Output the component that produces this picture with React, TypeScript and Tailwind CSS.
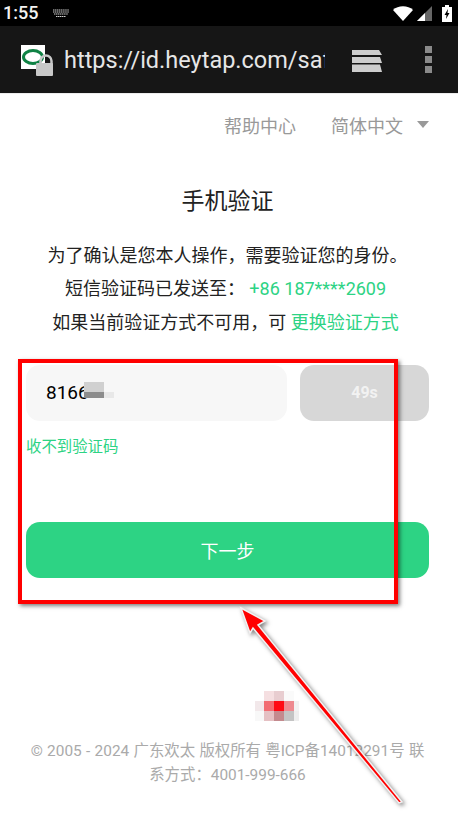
const FONT = "font-['Roboto','Noto_Sans_CJK_SC',sans-serif]"

function StatusBar() {
  return (
    <div className="flex h-[26px] items-center justify-between bg-black pl-[3px] pr-[6px]">
      <div className="flex items-center gap-[15px]">
        <span className="text-[18px] leading-none font-medium text-[#f2f2f2]">1:55</span>
        <svg width="16" height="9" viewBox="0 0 16 9" fill="none" stroke="#cfcfcf" strokeWidth="1.200">
          <path d="M0 1h16M0 3h16M1 5h14M3 7.500h10" strokeDasharray="1.400 .5" />
        </svg>
      </div>
      <div className="flex items-center">
        <svg width="20" height="15" viewBox="0 0 20 15" className="mr-[4px]">
          <path d="M0 4 C5 -1 15 -1 20 4 L10 15 Z" fill="#fff" />
        </svg>
        <svg width="15" height="15" viewBox="0 0 15 15" className="mr-[10px]">
          <path d="M0 15 L15 0 V15 Z" fill="#666" />
          <path d="M0 15 L8 7 V15 Z" fill="#fff" />
        </svg>
        <svg width="10" height="17" viewBox="0 0 10 17">
          <path d="M3 0h4v2h3v15H0V2h3z" fill="#fff" />
          <path d="M6 4 L2.500 10 H4.500 L4 14 L7.500 8 H5.500 Z" fill="#000" />
        </svg>
      </div>
    </div>
  )
}

function SiteIcon() {
  return (
    <svg width="34" height="32" viewBox="0 0 34 32" className="shrink-0">
      <rect x="0" y="0" width="24" height="24" fill="#fff" />
      <ellipse cx="12" cy="12" rx="9.500" ry="6.500" fill="none" stroke="#0f8244" strokeWidth="3" />
      <path d="M19.500 19v-3a5.500 5.500 0 0 1 11 0v3" fill="none" stroke="#c8c8c8" strokeWidth="2.500" />
      <rect x="15" y="18" width="17" height="13" rx="1" fill="#c8c8c8" />
    </svg>
  )
}

function Toolbar() {
  return (
    <div className="flex h-[67px] items-center bg-[#161616] pl-[21px]">
      <div className="mt-[2px]">
        <SiteIcon />
      </div>
      <div className="mt-[3px] ml-[9px] w-[261px] overflow-hidden text-[23.500px] leading-none whitespace-nowrap text-[#e6e6e6]">
        https://id.heytap.com/safe
      </div>
      <svg width="30" height="26" viewBox="0 0 30 26" className="ml-[27px]">
        <path d="M0 3h27l3 5H0z" fill="#cdcdcd" />
        <path d="M0 10h28l2 6H0z" fill="#cdcdcd" />
        <path d="M0 17.500h28l2 7.500H0z" fill="#cdcdcd" />
      </svg>
      <div className="ml-[43px] flex flex-col gap-[3px]">
        <span className="h-[7px] w-[7px] bg-[#8a8a8a]" />
        <span className="h-[7px] w-[7px] bg-[#8a8a8a]" />
        <span className="h-[7px] w-[7px] bg-[#8a8a8a]" />
      </div>
    </div>
  )
}

function Annotations() {
  return (
    <>
      <div className="absolute top-[359px] left-[18px] h-[245px] w-[380px] border-4 border-[#ff0000] shadow-[2px_2px_4px_rgba(0,0,0,0.5)]" />
      <svg
        width="458"
        height="820"
        viewBox="0 0 458 820"
        className="absolute top-0 left-0 drop-shadow-[2px_2px_2px_rgba(0,0,0,0.5)]"
      >
        <path
          d="M241 608 L265 621 L258 625 L402 802 L399 803 L253 628 L250 633 Z"
          fill="#ff0000"
          stroke="#f2f2f2"
          strokeWidth="1.500"
        />
      </svg>
    </>
  )
}

function Redactions() {
  return (
    <>
      <div className="absolute top-[382px] left-[84px] h-[10px] w-[20px] bg-[#d0d0d0]" />
      <div className="absolute top-[392px] left-[84px] h-[6px] w-[20px] bg-[#8c8c8c]" />
      <div className="absolute top-[392px] left-[104px] h-[6px] w-[10px] bg-[#e8e8e8]" />
      <div className="absolute top-[691px] left-[255px] grid grid-cols-[9px_10px_10px_10px_5px] grid-rows-[10px_10px_10px]">
        <span className="bg-white" />
        <span className="bg-[#f5dfe1]" />
        <span className="bg-[#e8cdd0]" />
        <span className="bg-[#fafafa]" />
        <span className="bg-white" />
        <span className="bg-[#f2e8ea]" />
        <span className="bg-[#f26c72]" />
        <span className="bg-[#ff0a14]" />
        <span className="bg-[#ee8a90]" />
        <span className="bg-[#f2f2f2]" />
        <span className="bg-[#f8f8f8]" />
        <span className="bg-[#e5c0c3]" />
        <span className="bg-[#c48a8e]" />
        <span className="bg-[#c4c4c4]" />
        <span className="bg-[#eeeeee]" />
      </div>
    </>
  )
}

export default function App() {
  return (
    <div className={`relative h-[820px] w-[458px] overflow-hidden bg-white ${FONT}`}>
      <StatusBar />
      <Toolbar />
      <div className="border-t border-[#ececec] pr-[29px] pl-[26px]">
        <div className="flex h-[65px] items-center justify-end text-[18px] text-[#999999]">
          <span>帮助中心</span>
          <span className="ml-[35px]">简体中文</span>
          <span className="mb-[5px] ml-[14px] h-0 w-0 border-x-[6.500px] border-t-[7px] border-x-transparent border-t-[#999999]" />
        </div>
        <h1 className="mt-[26px] text-center text-[23px] leading-[34px] text-[#222222]">手机验证</h1>
        <div className="mt-[21px] text-center text-[18px] text-[#222222]">
          <p className="leading-[32px] whitespace-nowrap">为了确认是您本人操作，需要验证您的身份。</p>
          <p className="pr-[4px] leading-[33px] whitespace-nowrap">
            短信验证码已发送至： <span className="text-[#2dd384]">+86 187****2609</span>
          </p>
          <p className="pr-[4px] leading-[36px] whitespace-nowrap">
            如果当前验证方式不可用，可 <span className="text-[#2dd384]">更换验证方式</span>
          </p>
        </div>
        <div className="mt-[24px] flex gap-[13px]">
          <div className="flex h-[56px] w-[261px] items-center rounded-[14px] bg-[#f7f7f7] pl-[20px] text-[19px] text-black">
            8166
          </div>
          <div className="flex h-[56px] w-[129px] items-center justify-center rounded-[14px] bg-[#d7d7d7] text-[16px] font-bold text-[#f2f2f2]">
            49s
          </div>
        </div>
        <div className="mt-[15px] text-[15.400px] leading-[22px] text-[#2dd384]">收不到验证码</div>
        <div className="mt-[64px] flex h-[56px] items-center justify-center rounded-[14px] bg-[#2dd384] pt-[2px] text-[18px] text-white">
          下一步
        </div>
        <div className="mt-[161px] text-center text-[15.400px] leading-[24px] text-[#aaaaaa] [word-spacing:0.5px]">
          © 2005 - 2024 广东欢太 版权所有 粤ICP备14012291号 联系方式：4001-999-666
        </div>
      </div>
      <Redactions />
      <Annotations />
    </div>
  )
}
